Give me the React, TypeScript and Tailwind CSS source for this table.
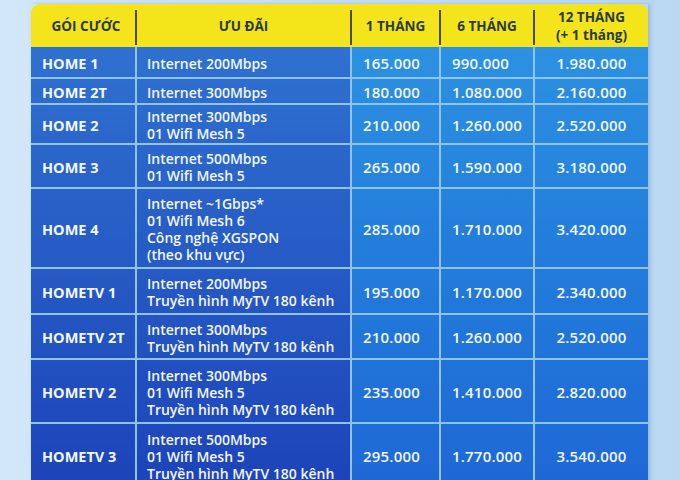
import React from "react";

type Row = {
  name: string;
  lines: string[];
  p: string[];
  h: string;
  first?: boolean;
};

const rows: Row[] = [
  { name: "HOME 1", lines: ["Internet 200Mbps"], p: ["165.000", "990.000", "1.980.000"], h: "h-[30px]", first: true },
  { name: "HOME 2T", lines: ["Internet 300Mbps"], p: ["180.000", "1.080.000", "2.160.000"], h: "h-[26px]" },
  { name: "HOME 2", lines: ["Internet 300Mbps", "01 Wifi Mesh 5"], p: ["210.000", "1.260.000", "2.520.000"], h: "h-[40px]" },
  { name: "HOME 3", lines: ["Internet 500Mbps", "01 Wifi Mesh 5"], p: ["265.000", "1.590.000", "3.180.000"], h: "h-[44px]" },
  {
    name: "HOME 4",
    lines: ["Internet ~1Gbps*", "01 Wifi Mesh 6", "Công nghệ XGSPON", "(theo khu vực)"],
    p: ["285.000", "1.710.000", "3.420.000"],
    h: "h-[80px]",
  },
  { name: "HOMETV 1", lines: ["Internet 200Mbps", "Truyền hình MyTV 180 kênh"], p: ["195.000", "1.170.000", "2.340.000"], h: "h-[46px]" },
  { name: "HOMETV 2T", lines: ["Internet 300Mbps", "Truyền hình MyTV 180 kênh"], p: ["210.000", "1.260.000", "2.520.000"], h: "h-[45px]" },
  {
    name: "HOMETV 2",
    lines: ["Internet 300Mbps", "01 Wifi Mesh 5", "Truyền hình MyTV 180 kênh"],
    p: ["235.000", "1.410.000", "2.820.000"],
    h: "h-[64px]",
  },
  {
    name: "HOMETV 3",
    lines: ["Internet 500Mbps", "01 Wifi Mesh 5", "Truyền hình MyTV 180 kênh"],
    p: ["295.000", "1.770.000", "3.540.000"],
    h: "h-[64px]",
  },
];

const dark = "bg-fixed bg-[linear-gradient(to_bottom,#3176d2_0%,#285fc7_45%,#1d44ba_100%)]";
const light = "bg-fixed bg-[linear-gradient(to_bottom,#2f96e3_0%,#2480dc_45%,#1e68d6_100%)]";

function Divider() {
  return <div className="w-[2px] h-[35px] self-end mb-[2px] bg-[#4d4a26] shrink-0" />;
}

export default function App() {
  return (
    <div
      className="w-[680px] h-[480px] overflow-hidden bg-[linear-gradient(to_right,#d2e8f9,#c4dff5_60%,#bad8f1)] pl-[31px] pt-[4px]"
      style={{ fontFamily: '"Open Sans", "Noto Sans", sans-serif' }}
    >
      <div className="w-[617px] shadow-[2px_0_4px_rgba(40,80,140,0.25)]">
        {/* Header */}
        <div className="flex h-[43px] bg-[#f3e41c] rounded-t-[9px] text-[#2b3a3c] font-bold text-[13.5px] leading-[18px]">
          <div className="w-[104px] shrink-0 flex items-center justify-center pl-[6px]">GÓI CƯỚC</div>
          <Divider />
          <div className="w-[213px] shrink-0 flex items-center justify-center">ƯU ĐÃI</div>
          <Divider />
          <div className="w-[87px] shrink-0 flex items-center justify-center">1 THÁNG</div>
          <Divider />
          <div className="w-[92px] shrink-0 flex items-center justify-center">6 THÁNG</div>
          <Divider />
          <div className="w-[113px] shrink-0 flex flex-col items-center justify-center">
            <span>12 THÁNG</span>
            <span>(+ 1 tháng)</span>
          </div>
        </div>
        {/* Body */}
        {rows.map((r) => (
          <div
            key={r.name}
            className={`flex gap-x-[2px] bg-[#8fc4ef] text-[#f2f7ff] ${r.h} ${r.first ? "" : "border-t-2 border-[#8fc4ef]"}`}
          >
            <div className={`${dark} w-[104px] shrink-0 flex items-center pl-[11px] pt-[3px] font-bold text-[14.5px]`}>
              {r.name}
            </div>
            <div className={`${dark} w-[213px] shrink-0 flex flex-col justify-center pl-[10px] pt-[2px] font-semibold text-[14px] leading-[17px]`}>
              {r.lines.map((l) => (
                <span key={l} className="whitespace-nowrap">
                  {l}
                </span>
              ))}
            </div>
            <div className={`${light} w-[87px] shrink-0 flex items-center pl-[11px] pt-[2px] font-semibold text-[15px] tracking-[0.2px]`}>
              {r.p[0]}
            </div>
            <div className={`${light} w-[92px] shrink-0 flex items-center pl-[11px] pt-[2px] font-semibold text-[15px] tracking-[0.2px]`}>
              {r.p[1]}
            </div>
            <div className={`${light} w-[113px] shrink-0 flex items-center justify-center pt-[2px] font-semibold text-[15px] tracking-[0.2px]`}>
              {r.p[2]}
            </div>
          </div>
        ))}
      </div>
    </div>
  );
}
